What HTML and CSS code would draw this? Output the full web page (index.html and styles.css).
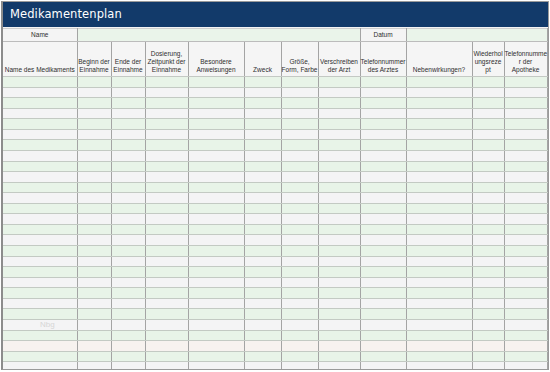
FILE: index.html
```html
<!DOCTYPE html>
<html lang="de">
<head>
<meta charset="utf-8">
<title>Medikamentenplan</title>
<link rel="stylesheet" href="styles.css">
</head>
<body>
<div class="frame">
  <div class="title">Medikamentenplan</div>
  <table class="sheet">
    <colgroup>
      <col class="w74"><col class="w34"><col class="w34"><col class="w43"><col class="w56"><col class="w37"><col class="w37"><col class="w42"><col class="w46"><col class="w66"><col class="w32"><col class="w43">
    </colgroup>
    <thead>
      <tr class="meta">
        <td class="lbl">Name</td>
        <td class="fill" colspan="7"></td>
        <td class="lbl">Datum</td>
        <td class="fill" colspan="3"></td>
      </tr>
      <tr class="head">
        <th>Name des Medikaments</th>
        <th>Beginn der<br>Einnahme</th>
        <th>Ende der<br>Einnahme</th>
        <th>Dosierung,<br>Zeitpunkt der<br>Einnahme</th>
        <th>Besondere<br>Anweisungen</th>
        <th>Zweck</th>
        <th>Größe,<br>Form, Farbe</th>
        <th>Verschreiben<br>der Arzt</th>
        <th>Telefonnummer<br>des Arztes</th>
        <th>Nebenwirkungen?</th>
        <th>Wiederhol<br>ungsreze<br>pt</th>
        <th>Telefonnumme<br>r der<br>Apotheke</th>
      </tr>
    </thead>
    <tbody>
      <tr class="even"><td></td><td></td><td></td><td></td><td></td><td></td><td></td><td></td><td></td><td></td><td></td><td></td></tr>
      <tr class="odd"><td></td><td></td><td></td><td></td><td></td><td></td><td></td><td></td><td></td><td></td><td></td><td></td></tr>
      <tr class="even"><td></td><td></td><td></td><td></td><td></td><td></td><td></td><td></td><td></td><td></td><td></td><td></td></tr>
      <tr class="odd"><td></td><td></td><td></td><td></td><td></td><td></td><td></td><td></td><td></td><td></td><td></td><td></td></tr>
      <tr class="even"><td></td><td></td><td></td><td></td><td></td><td></td><td></td><td></td><td></td><td></td><td></td><td></td></tr>
      <tr class="odd"><td></td><td></td><td></td><td></td><td></td><td></td><td></td><td></td><td></td><td></td><td></td><td></td></tr>
      <tr class="even"><td></td><td></td><td></td><td></td><td></td><td></td><td></td><td></td><td></td><td></td><td></td><td></td></tr>
      <tr class="odd"><td></td><td></td><td></td><td></td><td></td><td></td><td></td><td></td><td></td><td></td><td></td><td></td></tr>
      <tr class="even"><td></td><td></td><td></td><td></td><td></td><td></td><td></td><td></td><td></td><td></td><td></td><td></td></tr>
      <tr class="odd"><td></td><td></td><td></td><td></td><td></td><td></td><td></td><td></td><td></td><td></td><td></td><td></td></tr>
      <tr class="even"><td></td><td></td><td></td><td></td><td></td><td></td><td></td><td></td><td></td><td></td><td></td><td></td></tr>
      <tr class="odd"><td></td><td></td><td></td><td></td><td></td><td></td><td></td><td></td><td></td><td></td><td></td><td></td></tr>
      <tr class="even"><td></td><td></td><td></td><td></td><td></td><td></td><td></td><td></td><td></td><td></td><td></td><td></td></tr>
      <tr class="odd"><td></td><td></td><td></td><td></td><td></td><td></td><td></td><td></td><td></td><td></td><td></td><td></td></tr>
      <tr class="even"><td></td><td></td><td></td><td></td><td></td><td></td><td></td><td></td><td></td><td></td><td></td><td></td></tr>
      <tr class="odd"><td></td><td></td><td></td><td></td><td></td><td></td><td></td><td></td><td></td><td></td><td></td><td></td></tr>
      <tr class="even"><td></td><td></td><td></td><td></td><td></td><td></td><td></td><td></td><td></td><td></td><td></td><td></td></tr>
      <tr class="odd"><td></td><td></td><td></td><td></td><td></td><td></td><td></td><td></td><td></td><td></td><td></td><td></td></tr>
      <tr class="even"><td></td><td></td><td></td><td></td><td></td><td></td><td></td><td></td><td></td><td></td><td></td><td></td></tr>
      <tr class="odd"><td></td><td></td><td></td><td></td><td></td><td></td><td></td><td></td><td></td><td></td><td></td><td></td></tr>
      <tr class="even"><td></td><td></td><td></td><td></td><td></td><td></td><td></td><td></td><td></td><td></td><td></td><td></td></tr>
      <tr class="odd"><td></td><td></td><td></td><td></td><td></td><td></td><td></td><td></td><td></td><td></td><td></td><td></td></tr>
      <tr class="even"><td></td><td></td><td></td><td></td><td></td><td></td><td></td><td></td><td></td><td></td><td></td><td></td></tr>
      <tr class="odd"><td></td><td></td><td></td><td></td><td></td><td></td><td></td><td></td><td></td><td></td><td></td><td></td></tr>
      <tr class="even"><td></td><td></td><td></td><td></td><td></td><td></td><td></td><td></td><td></td><td></td><td></td><td></td></tr>
      <tr class="pink"><td></td><td></td><td></td><td></td><td></td><td></td><td></td><td></td><td></td><td></td><td></td><td></td></tr>
      <tr class="even"><td></td><td></td><td></td><td></td><td></td><td></td><td></td><td></td><td></td><td></td><td></td><td></td></tr>
      <tr class="odd last"><td></td><td></td><td></td><td></td><td></td><td></td><td></td><td></td><td></td><td></td><td></td><td></td></tr>
    </tbody>
  </table>
  <div class="mark">Nbg</div>
</div>
</body>
</html>
```
FILE: styles.css
```css
html, body { margin: 0; padding: 0; background: #ffffff; }
body { width: 550px; height: 372px; overflow: hidden; font-family: "Liberation Sans", Arial, sans-serif; }

.frame {
  position: relative;
  margin: 1px 0 0 1px;
  width: 545px;
  height: 367px;
  border: 1px solid #9a9a9a;
  border-left: 2px solid #8c8c8c;
  background: #f4f4f4;
  overflow: hidden;
}

.title {
  height: 25px;
  background: #123a6a;
  color: #ffffff;
  font-family: "DejaVu Sans", sans-serif;
  font-size: 11.5px;
  line-height: 25px;
  padding-left: 7px;
  margin-bottom: 1px;
  letter-spacing: 0.1px;
}

.sheet {
  table-layout: fixed;
  border-collapse: collapse;
  width: 544px;
}
.w74 { width: 74px; } .w34 { width: 34px; } .w43 { width: 43px; } .w56 { width: 56px; }
.w37 { width: 37px; } .w42 { width: 42px; } .w46 { width: 46px; } .w66 { width: 66px; } .w32 { width: 32px; }

.sheet td, .sheet th {
  padding: 0;
  border-left: 1px solid #a4a4a4;
  border-right: 1px solid #a4a4a4;
  font-size: 6.5px;
  font-weight: normal;
  color: #2e2e2e;
  line-height: 8px;
}
.sheet td:first-child, .sheet th:first-child { border-left: none; }

.meta td { height: 12px; border-bottom: 1px solid #bcbcbc; border-top: 1px solid #cfcfcf; }
.meta .lbl { background: #f4f4f4; text-align: center; vertical-align: middle; }
.meta .fill { background: #eaf4ea; }

.head th {
  height: 32px;
  background: #f5f5f5;
  text-align: center;
  vertical-align: bottom;
  padding: 0 0 2px;
  border-bottom: 1px solid #c4c9c4;
  white-space: nowrap;
  overflow: visible;
}

tbody td { height: 9.57px; border-bottom: 1px solid #c3cac3; }
tbody tr.even td { background: #e8f4e8; }
tbody tr.odd td { background: #f4f4f5; }
tbody tr.pink td { background: #f7f2ef; }
tbody tr.last td { border-bottom: none; }

.mark {
  position: absolute;
  left: 37px;
  top: 318px;
  font-size: 8px;
  color: #d6d6d6;
}
```
